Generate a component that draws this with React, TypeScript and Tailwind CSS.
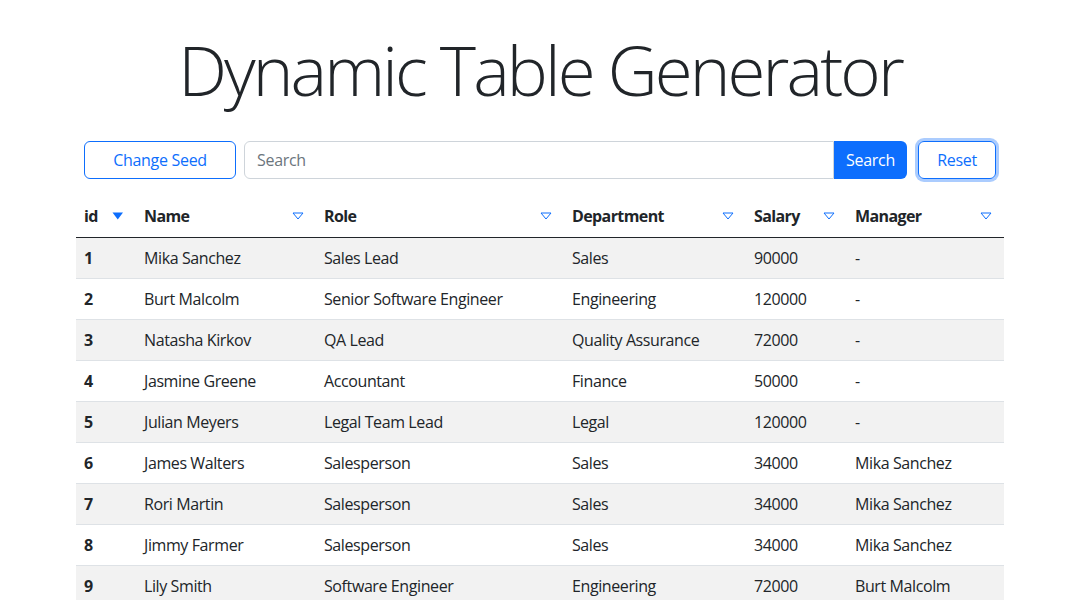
import React from 'react';

type Row = {
  id: number;
  name: string;
  role: string;
  department: string;
  salary: number;
  manager: string;
};

const ROWS: Row[] = [
  { id: 1, name: 'Mika Sanchez', role: 'Sales Lead', department: 'Sales', salary: 90000, manager: '-' },
  { id: 2, name: 'Burt Malcolm', role: 'Senior Software Engineer', department: 'Engineering', salary: 120000, manager: '-' },
  { id: 3, name: 'Natasha Kirkov', role: 'QA Lead', department: 'Quality Assurance', salary: 72000, manager: '-' },
  { id: 4, name: 'Jasmine Greene', role: 'Accountant', department: 'Finance', salary: 50000, manager: '-' },
  { id: 5, name: 'Julian Meyers', role: 'Legal Team Lead', department: 'Legal', salary: 120000, manager: '-' },
  { id: 6, name: 'James Walters', role: 'Salesperson', department: 'Sales', salary: 34000, manager: 'Mika Sanchez' },
  { id: 7, name: 'Rori Martin', role: 'Salesperson', department: 'Sales', salary: 34000, manager: 'Mika Sanchez' },
  { id: 8, name: 'Jimmy Farmer', role: 'Salesperson', department: 'Sales', salary: 34000, manager: 'Mika Sanchez' },
  { id: 9, name: 'Lily Smith', role: 'Software Engineer', department: 'Engineering', salary: 72000, manager: 'Burt Malcolm' },
];

const COLUMNS = [
  { key: 'id', label: 'id', width: 'w-[60px]', active: true },
  { key: 'name', label: 'Name', width: 'w-[180px]', active: false },
  { key: 'role', label: 'Role', width: 'w-[248px]', active: false },
  { key: 'department', label: 'Department', width: 'w-[182px]', active: false },
  { key: 'salary', label: 'Salary', width: 'w-[101px]', active: false },
  { key: 'manager', label: 'Manager', width: 'w-[157px]', active: false },
];

function SortArrow({ active }: { active: boolean }) {
  return (
    <svg width="12" height="8" viewBox="0 0 12 8" className="shrink-0">
      {active ? (
        <path d="M0.5 0.5 L11 0.5 L5.75 7.5 Z" fill="#0d6efd" />
      ) : (
        <path d="M1 1 L11 1 L6 7 Z" fill="none" stroke="#0d6efd" strokeWidth="1" strokeLinejoin="round" />
      )}
    </svg>
  );
}

export default function App() {
  return (
    <div className="min-h-screen bg-white text-[#212529] font-['Open_Sans','Noto_Sans',sans-serif]">
      <div className="mx-auto w-[928px] pt-[28px]">
        <h1 className="text-center text-[69px] font-light leading-[1.2] tracking-[-2.9px]">
          Dynamic Table Generator
        </h1>

        <div className="mt-[30px] flex items-center px-[8px]">
          <button className="h-[38px] w-[152px] rounded-[6px] border border-[#0d6efd] text-[16px] tracking-[-0.3px] text-[#0d6efd]">
            Change Seed
          </button>
          <div className="ml-[8px] flex flex-1">
            <input
              placeholder="Search"
              className="h-[38px] flex-1 rounded-l-[6px] border border-[#ced4da] px-[12px] text-[16px] tracking-[-0.3px] outline-none placeholder:text-[#6c757d]"
            />
            <button className="h-[38px] w-[73px] rounded-r-[6px] bg-[#0d6efd] text-[16px] tracking-[-0.3px] text-white">
              Search
            </button>
          </div>
          <button className="ml-[11px] h-[38px] w-[78px] rounded-[6px] border border-[#0d6efd] text-[16px] tracking-[-0.3px] text-[#0d6efd] shadow-[0_0_0_3px_rgba(13,110,253,0.35)]">
            Reset
          </button>
        </div>

        <table className="mt-[20px] w-full border-collapse text-[16px] tracking-[-0.4px]">
          <thead>
            <tr className="border-b border-[#212529]">
              {COLUMNS.map((c) => (
                <th key={c.key} className={`${c.width} px-[8px] pt-[5px] pb-[9px] text-left font-bold tracking-[-0.6px]`}>
                  <div className="flex items-center justify-between pr-[4px]">
                    <span>{c.label}</span>
                    <SortArrow active={c.active} />
                  </div>
                </th>
              ))}
            </tr>
          </thead>
          <tbody>
            {ROWS.map((r, i) => (
              <tr key={r.id} className={`border-b border-[#dee2e6] ${i % 2 === 0 ? 'bg-[#f2f2f2]' : 'bg-white'}`}>
                <td className="px-[8px] py-[8px] font-bold leading-[24px]">{r.id}</td>
                <td className="px-[8px] py-[8px] leading-[24px]">{r.name}</td>
                <td className="px-[8px] py-[8px] leading-[24px]">{r.role}</td>
                <td className="px-[8px] py-[8px] leading-[24px]">{r.department}</td>
                <td className="px-[8px] py-[8px] leading-[24px]">{r.salary}</td>
                <td className="px-[8px] py-[8px] leading-[24px]">{r.manager}</td>
              </tr>
            ))}
          </tbody>
        </table>
      </div>
    </div>
  );
}
